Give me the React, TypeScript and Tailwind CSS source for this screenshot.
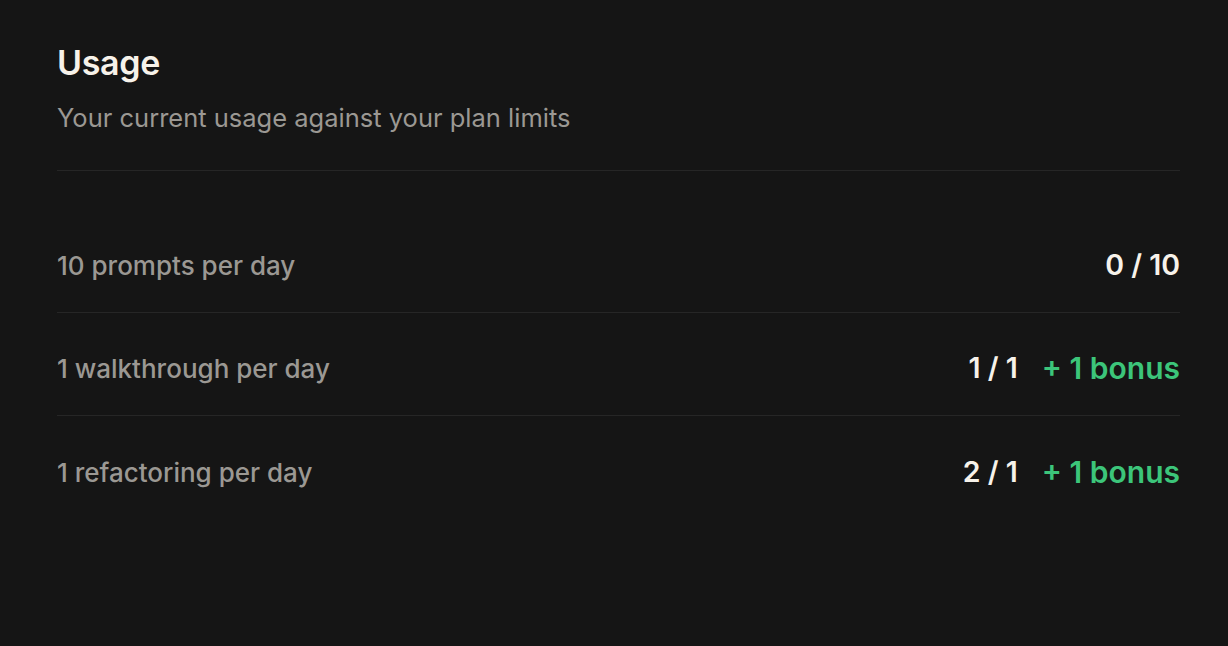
const rows = [
  { label: "10 prompts per day", value: "0 / 10", bonus: null },
  { label: "1 walkthrough per day", value: "1 / 1", bonus: "+ 1 bonus" },
  { label: "1 refactoring per day", value: "2 / 1", bonus: "+ 1 bonus" },
];

export default function App() {
  return (
    <div className="min-h-screen w-full bg-[#151515] font-['Inter',sans-serif] pl-[57px] pr-[48px] pt-[44px]">
      {/* Header */}
      <h1 className="text-[34px] font-semibold leading-[38px] tracking-[-0.01em] text-[#f7f2ea]">Usage</h1>
      <p className="mt-[20px] text-[25.5px] leading-[32px] text-[#9b9893]">
        Your current usage against your plan limits
      </p>
      <div className="mt-[36px] h-px bg-[#262626]" />

      {/* Rows */}
      <div className="mt-[39px] flex flex-col">
        {rows.map((row, i) => (
          <div
            key={row.label}
            className={`flex h-[103px] items-center justify-between pt-[9px] ${i < rows.length - 1 ? "border-b border-[#262626]" : ""}`}
          >
            <span className="text-[26px] font-medium text-[#9b9893]">{row.label}</span>
            <div className="flex items-center gap-[24px] font-semibold">
              <span className="text-[28.5px] text-[#f7f2ea]">{row.value}</span>
              {row.bonus && <span className="text-[30px] text-[#3cc57a]">{row.bonus}</span>}
            </div>
          </div>
        ))}
      </div>
    </div>
  );
}
